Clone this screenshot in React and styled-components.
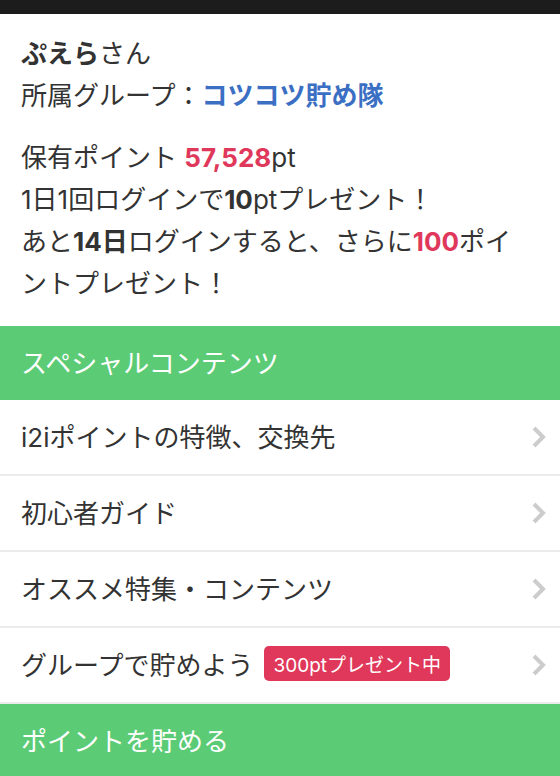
import React from "react";
import styled, { createGlobalStyle } from "styled-components";

const Global = createGlobalStyle`
  html, body { margin: 0; padding: 0; background: #ffffff; }
  body {
    font-family: Inter, "Noto Sans CJK JP", sans-serif;
    color: #333333;
    -webkit-font-smoothing: antialiased;
  }
`;

const TopBar = styled.div`
  height: 14px;
  background: #1c1c1c;
`;

const Profile = styled.section`
  padding: 19px 21px 21px;
  font-size: 26px;
  line-height: 42px;
  color: #333333;
`;

const Block = styled.div`
  margin-top: ${(p) => (p.$gap ? "20px" : "0")};
`;

const Line = styled.div`
  white-space: nowrap;
`;

const Strong = styled.span`
  font-weight: 700;
  color: ${(p) => p.$color || "#333333"};
`;

const SectionHeader = styled.div`
  box-sizing: border-box;
  height: 74px;
  display: flex;
  align-items: center;
  padding: 0 21px 3px;
  background: #5ccb76;
  color: #ffffff;
  font-size: 26px;
`;

const List = styled.ul`
  list-style: none;
  margin: 0;
  padding: 0;
`;

const Item = styled.li`
  box-sizing: border-box;
  height: 76px;
  display: flex;
  align-items: center;
  padding: 0 13px 3px 21px;
  border-bottom: 2px solid #ebebeb;
  font-size: 26px;
  color: #333333;
`;

const Label = styled.span`
  flex: 1;
  display: flex;
  align-items: center;
  gap: 11px;
`;

const Badge = styled.span`
  display: inline-flex;
  align-items: center;
  height: 35px;
  padding: 0 9px;
  border-radius: 5px;
  background: #e0385a;
  color: #ffffff;
  font-size: 19px;
`;

const ChevronWrap = styled.span`
  display: flex;
  margin-top: 3px;
`;

const Chevron = () => (
  <ChevronWrap>
    <svg width="16" height="24" viewBox="0 0 16 24" aria-hidden="true">
      <polyline
        points="3,3 12,12 3,21"
        fill="none"
        stroke="#cccccc"
        strokeWidth="4"
        strokeLinecap="butt"
        strokeLinejoin="miter"
      />
    </svg>
  </ChevronWrap>
);

const items = [
  { label: "i2iポイントの特徴、交換先" },
  { label: "初心者ガイド" },
  { label: "オススメ特集・コンテンツ" },
  { label: "グループで貯めよう", badge: "300ptプレゼント中" },
];

export default function App() {
  return (
    <>
      <Global />
      <TopBar />
      <Profile>
        <Block>
          <Line>
            <Strong>ぷえら</Strong>さん
          </Line>
          <Line>
            所属グループ：<Strong $color="#3b6fc4">コツコツ貯め隊</Strong>
          </Line>
        </Block>
        <Block $gap>
          <Line>
            保有ポイント <Strong $color="#e0385a">57,528</Strong>pt
          </Line>
          <Line>
            1日1回ログインで<Strong>10</Strong>ptプレゼント！
          </Line>
          <Line>
            あと<Strong>14日</Strong>ログインすると、さらに
            <Strong $color="#e0385a">100</Strong>ポイ
          </Line>
          <Line>ントプレゼント！</Line>
        </Block>
      </Profile>
      <SectionHeader>スペシャルコンテンツ</SectionHeader>
      <List>
        {items.map((it) => (
          <Item key={it.label}>
            <Label>
              {it.label}
              {it.badge && <Badge>{it.badge}</Badge>}
            </Label>
            <Chevron />
          </Item>
        ))}
      </List>
      <SectionHeader>ポイントを貯める</SectionHeader>
    </>
  );
}
